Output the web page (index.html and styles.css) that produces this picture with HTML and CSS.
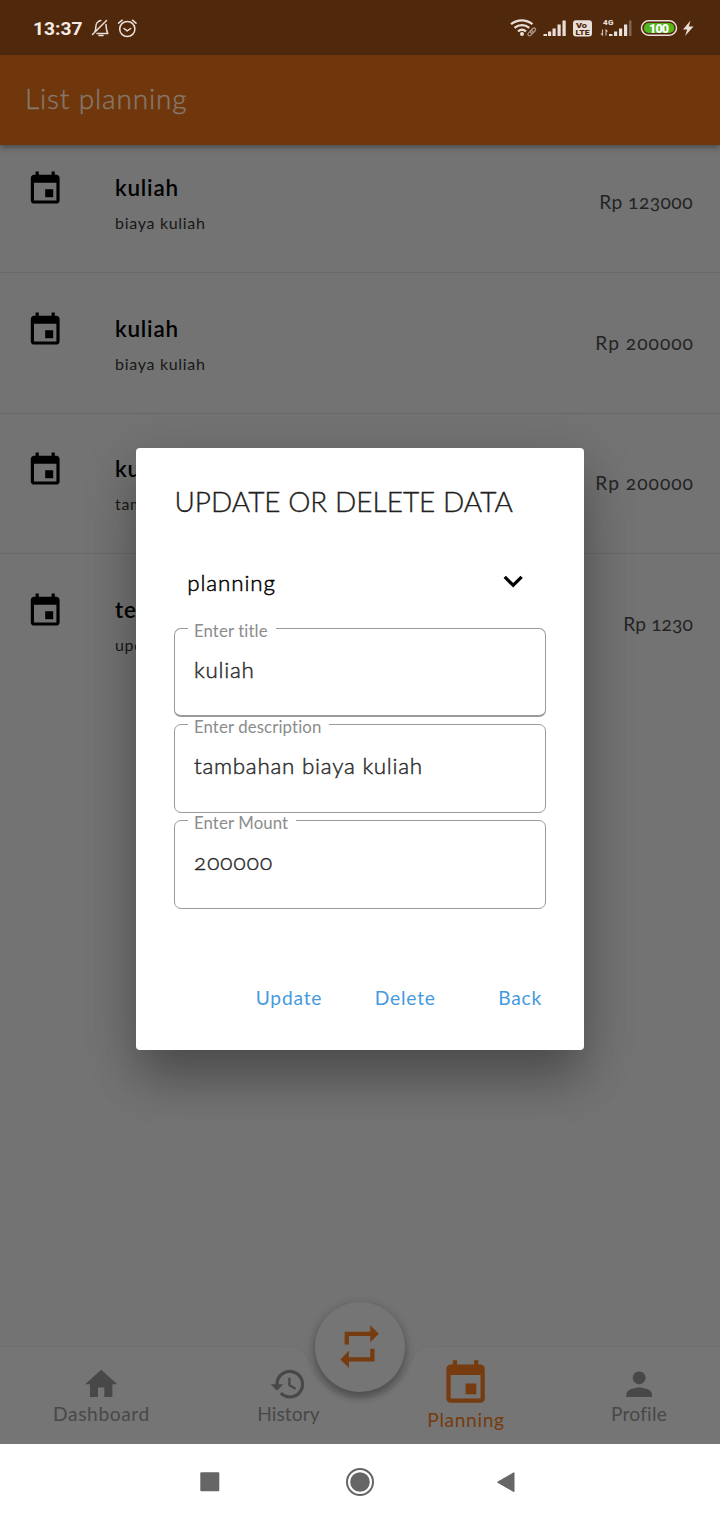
FILE: index.html
```html
<!DOCTYPE html>
<html lang="en">
<head>
<meta charset="utf-8">
<title>List planning</title>
<link rel="stylesheet" href="styles.css">
</head>
<body>
<svg class="defs" width="0" height="0">
  <symbol id="event" viewBox="0 0 24 24"><path d="M17 12h-5v5h5v-5zM16 1v2H8V1H6v2H5c-1.11 0-1.99.9-1.99 2L3 19c0 1.1.89 2 2 2h14c1.1 0 2-.9 2-2V5c0-1.100-.9-2-2-2h-1V1h-2zm3 18H5V8h14v11z"/></symbol>
</svg>
<div class="screen">
  <header class="status">
    <span class="clock">13:37</span>
    <svg class="status-left" width="50" height="24" viewBox="90 16 50 24" fill="none" stroke="#eadfd8" stroke-width="1.5" stroke-linecap="round" stroke-linejoin="round">
      <path d="M94.500 32.500c1.300-1.500 1.300-3 1.300-5.500 0-3 2-6 5-6.500M106 24.500c.4 3 0 6 1.800 9H97M92.500 34.500L106.500 20.500M99 35.500h4"/>
      <circle cx="127.300" cy="29" r="7.600"/><path d="M124 28.500l3.200 2.400 3.400-2.400M118.600 23.200l3.600-3M136 23.200l-3.600-3"/>
    </svg>
    <svg class="status-right" width="190" height="28" viewBox="508 14 190 28">
      <g fill="none" stroke="#eadfd8" stroke-width="2.300"><path d="M511 24.200c6.500-5.200 15-5.200 21.500 0M514.500 27.900c4.500-3.600 10.500-3.600 14.800 0M518 31.400c2.400-2 5.600-2 8 0"/></g>
      <circle cx="522" cy="34" r="2" fill="#eadfd8"/>
      <g fill="none" stroke="#b09a8c" stroke-width="1.200"><rect x="527.500" y="31.700" width="6" height="3.200" rx="1.600" transform="rotate(-45 530.5 33.300)"/><rect x="530" y="29" width="6" height="3.200" rx="1.600" transform="rotate(-45 533 30.600)"/></g>
      <path fill="#eadfd8" d="M543.500 34h3.500v2h-3.500zM548 31.500h3.200v4.500H548zM552.500 28.500h3.200v7.500h-3.200zM557.500 24.500h3.200v11.500h-3.200zM562.500 20.500h3.200v15.500h-3.200z"/>
      <rect x="573" y="20.300" width="19" height="16.200" rx="3" fill="#eadfd8"/>
      <g class="volte"><text x="576" y="27.800" textLength="11" lengthAdjust="spacingAndGlyphs">Vo</text><text x="575.500" y="35" textLength="14" lengthAdjust="spacingAndGlyphs">LTE</text></g>
      <text class="net" x="603" y="25" textLength="10.500">4G</text>
      <path fill="none" stroke="#d0beb2" stroke-width="1.100" d="M602.500 29.500v5.500l-1.500-1.500M606 35.500v-5.500l1.500 1.500"/>
      <path fill="#eadfd8" d="M609 34h3.500v2H609zM614 31.500h3.200v4.500H614zM619 28.500h3.200v7.500h-3.200zM624 24.500h3.200v11.500h-3.200z"/><path fill="#806452" d="M629 20.500h2.500v15.500H629z"/>
      <rect x="641.500" y="20.800" width="35" height="14.400" rx="7.200" fill="none" stroke="#eadfd8" stroke-width="1.500"/>
      <rect x="643.800" y="23" width="30.500" height="10" rx="5" fill="#55b51c"/>
      <text class="batt" x="649" y="32.600" textLength="20">100</text>
      <path fill="#eadfd8" d="M690.500 20.500L683 29.500h4.200L685 36l8.500-9.500h-4.700z"/>
    </svg>
  </header>
  <div class="appbar"><h1>List planning</h1></div>
  <main class="list">
    <div class="row"><svg class="ic"><use href="#event"/></svg><div class="info"><b>kuliah</b><span>biaya kuliah</span></div><em>Rp 123000</em></div>
    <div class="row"><svg class="ic"><use href="#event"/></svg><div class="info"><b>kuliah</b><span>biaya kuliah</span></div><em class="wide">Rp 200000</em></div>
    <div class="row"><svg class="ic"><use href="#event"/></svg><div class="info"><b>kuliah</b><span>tambah</span></div><em class="wide">Rp 200000</em></div>
    <div class="row last"><svg class="ic"><use href="#event"/></svg><div class="info"><b>test</b><span>update</span></div><em class="tight">Rp 1230</em></div>
  </main>
  <nav class="tabs">
    <svg class="notch" width="720" height="98" viewBox="0 0 720 98"><path fill="#757575" stroke="#707070" d="M-1 0.500H286C303 .5 307 8 311 20C319 39 337 52 360 52S401 39 409 20C413 8 417 .5 434 .5H721V99H-1z"/></svg>
    <div class="tab t1"><svg class="ic" viewBox="0 0 24 24"><path d="M10 20v-6h4v6h5v-8h3L12 3 2 12h3v8z"/></svg><span>Dashboard</span></div>
    <div class="tab t2"><svg class="ic" viewBox="0 0 24 24"><path d="M13 3c-4.970 0-9 4.030-9 9H1l3.890 3.890.07.14L9 12H6c0-3.870 3.130-7 7-7s7 3.130 7 7-3.130 7-7 7c-1.930 0-3.680-.79-4.940-2.060l-1.420 1.420C8.270 19.990 10.510 21 13 21c4.970 0 9-4.030 9-9s-4.030-9-9-9zm-1 5v5l4.280 2.540.72-1.210-3.500-2.080V8H12z"/></svg><span>History</span></div>
    <div class="tab t3"><svg class="ic"><use href="#event"/></svg><span>Planning</span></div>
    <div class="tab t4"><svg class="ic" viewBox="0 0 24 24"><path d="M12 12c2.210 0 4-1.790 4-4s-1.790-4-4-4-4 1.790-4 4 1.790 4 4 4zm0 2c-2.670 0-8 1.340-8 4v2h16v-2c0-2.660-5.330-4-8-4z"/></svg><span>Profile</span></div>
    <div class="fab"><svg class="ic" viewBox="0 0 24 24"><path d="M7 7h10v3l4-4-4-4v3H5v6h2V7zm10 10H7v-3l-4 4 4 4v-3h12v-6h-2v4z"/></svg></div>
  </nav>
  <footer class="system">
    <svg width="720" height="77" viewBox="0 0 720 77" fill="#666"><rect x="200.300" y="29.300" width="19" height="19" rx="1"/><circle cx="360" cy="39" r="9.800"/><circle cx="360" cy="39" r="13" fill="none" stroke="#666" stroke-width="2"/><path d="M497.500 39.200L514 29.700V48.700z" stroke="#666" stroke-linejoin="round"/></svg>
  </footer>
  <section class="dialog">
    <h2>UPDATE OR DELETE DATA</h2>
    <div class="select"><span>planning</span><svg class="ic" viewBox="0 0 24 24"><path d="M7.410 8.590L12 13.170l4.590-4.580L18 10l-6 6-6-6z"/></svg></div>
    <div class="fields">
      <div class="field first"><label>Enter title</label><p>kuliah</p></div>
      <div class="field"><label>Enter description</label><p>tambahan biaya kuliah</p></div>
      <div class="field"><label>Enter Mount</label><p class="amount">200000</p></div>
    </div>
    <div class="actions"><a class="update">Update</a><a class="delete">Delete</a><a>Back</a></div>
  </section>
</div>
</body>
</html>
```
FILE: styles.css
```css
* { box-sizing: border-box; margin: 0; padding: 0; }
body { font-family: Lato, "Open Sans", sans-serif; font-variant-numeric: oldstyle-nums; }
.defs { position: absolute; }
.screen { position: relative; width: 720px; height: 1520px; display: flex; flex-direction: column; background: #737373; overflow: hidden; }
.ic { width: 38.4px; height: 38.4px; fill: currentColor; display: block; flex: none; }

.status { height: 55px; background: #50290c; display: flex; align-items: center; padding: 0 22px 0 33px; }
.clock { font: 700 19.200px Roboto, sans-serif; color: #f6ebe4; width: 57px; padding-top: 2px; }
.status-right { margin-left: auto; }
.status text { font-family: Roboto, sans-serif; font-weight: 900; font-variant-numeric: lining-nums; }
.volte { font-size: 8px; fill: #50290c; }
.net { font-size: 8px; fill: #eadfd8; }
.batt { font-size: 12.5px; fill: #fff; }

.appbar { position: relative; height: 89.500px; background: #70370c; display: flex; align-items: center; padding: 0 0 3px 25px; box-shadow: 0 2px 6px rgba(0,0,0,.4); }
.appbar h1 { font-size: 28px; font-weight: 300; letter-spacing: .85px; color: #87776b; -webkit-text-stroke: .4px #87776b; }

.list { flex: 1; color: #000; }
.row { height: 140.700px; display: flex; padding: 37.700px 27px 0 25.600px; border-bottom: 1.500px solid #696969; }
.row:first-child { height: 128.400px; padding-top: 25.800px; }
.row.last { border: 0; }
.info { margin-left: 51px; flex: 1; display: flex; flex-direction: column; }
.info b { font-size: 22.400px; line-height: 36px; font-weight: 600; letter-spacing: .8px; }
.info span { font-size: 16px; line-height: 34px; letter-spacing: .7px; color: #181818; }
.row em { font-style: normal; font-size: 19.200px; line-height: 64px; letter-spacing: .45px; color: #242424; }
.row .wide { letter-spacing: 1px; margin-right: -1px; }
.row .tight { letter-spacing: .1px; }

.tabs { position: relative; height: 97px; display: flex; color: #484848; }
.notch { position: absolute; left: 0; top: 0; }
.tab { position: relative; display: flex; flex-direction: column; align-items: center; padding-top: 18.600px; font-size: 19.200px; }
.tab span { line-height: 21px; }
.t1 { width: 203px; letter-spacing: .6px; }
.t2 { width: 171px; letter-spacing: .1px; }
.t3 { width: 184px; color: #763b0e; padding-top: 12px; letter-spacing: .65px; }
.t4 { width: 162px; letter-spacing: .2px; }
.t3 .ic, .fab .ic { width: 51.200px; height: 51.200px; }
.fab { position: absolute; left: 315px; top: -44.500px; width: 90px; height: 90px; border-radius: 50%; background: #757575; color: #763b0e; display: flex; align-items: center; justify-content: center; box-shadow: 0 5px 8px rgba(0,0,0,.3), 0 1px 12px rgba(0,0,0,.1); }
.system { height: 77px; background: #fff; }
.system svg { display: block; }

.dialog { position: absolute; left: 136px; top: 448px; width: 448px; height: 602px; background: #fff; border-radius: 4px; padding: 35px 38.400px 0; box-shadow: 0 36px 44px -6px rgba(0,0,0,.22), 0 14px 52px 3px rgba(0,0,0,.18); }
.dialog h2 { font-size: 28px; line-height: 36px; font-weight: 300; color: #212121; white-space: nowrap; -webkit-text-stroke: .35px #212121; }
.select { display: flex; justify-content: space-between; align-items: center; margin-top: 43px; padding: 0 13px 0 12.800px; height: 38.400px; font-size: 22.400px; font-weight: 300; }
.select span { letter-spacing: .9px; padding-top: 2px; -webkit-text-stroke: .5px #000; }
.fields { display: grid; gap: 6.500px; margin-top: 27.400px; }
.field { position: relative; height: 89.500px; border: 1.600px solid #9a9a9a; border-radius: 7px; padding: 27.600px 18.600px; color: #2a2a2a; }
.field.first { border-bottom-width: 2px; }
.field label { position: absolute; left: 12.500px; top: -7px; padding: 0 8px 0 6px; background: linear-gradient(#fff, #fff) 0 4px no-repeat; font-size: 16.800px; line-height: 18px; letter-spacing: .12px; color: #8c8c8c; white-space: nowrap; }
.field p { font-size: 22.400px; line-height: 28px; font-weight: 300; letter-spacing: .75px; white-space: nowrap; -webkit-text-stroke: .45px #2a2a2a; }
.field .amount { letter-spacing: 1.100px; }
.actions { display: flex; justify-content: flex-end; margin-top: 74.500px; padding-right: 3.500px; font-size: 19.200px; line-height: 28px; letter-spacing: .8px; color: #459ade; }
.update { margin-right: 52.500px; }
.delete { margin-right: 62.500px; }
```
